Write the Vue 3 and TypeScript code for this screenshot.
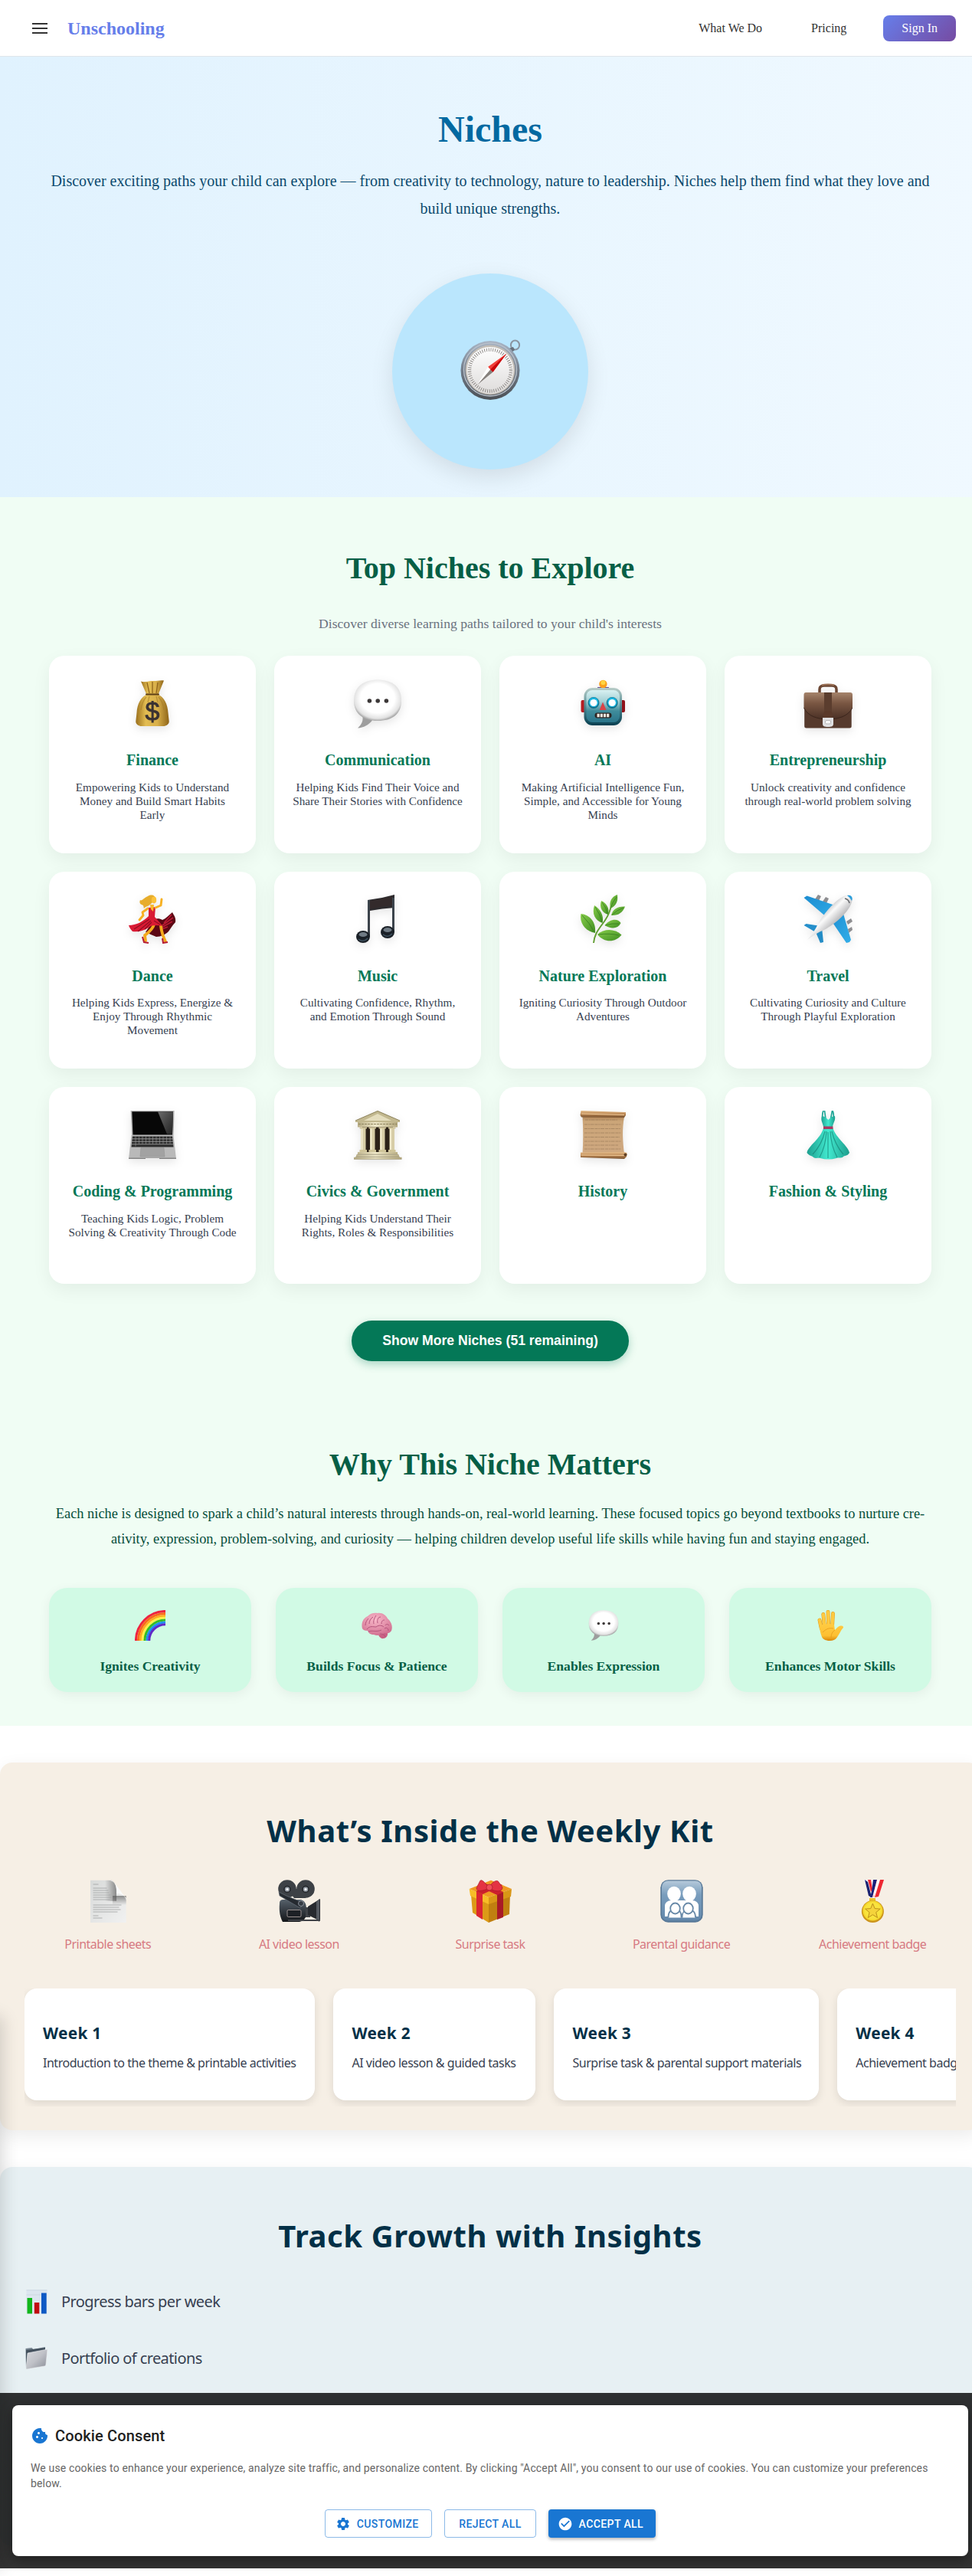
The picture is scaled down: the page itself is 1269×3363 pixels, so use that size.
<script setup lang="ts">
interface Niche {
  icon: string
  name: string
  text: string
}

interface Week {
  title: string
  text: string
  width: number
}

const niches: Niche[] = [
  { icon: 'money', name: 'Finance', text: 'Empowering Kids to Understand Money and Build Smart Habits Early' },
  { icon: 'speech', name: 'Communication', text: 'Helping Kids Find Their Voice and Share Their Stories with Confidence' },
  { icon: 'robot', name: 'AI', text: 'Making Artificial Intelligence Fun, Simple, and Accessible for Young Minds' },
  { icon: 'briefcase', name: 'Entrepreneurship', text: 'Unlock creativity and confidence through real-world problem solving' },
  { icon: 'dancer', name: 'Dance', text: 'Helping Kids Express, Energize & Enjoy Through Rhythmic Movement' },
  { icon: 'notes', name: 'Music', text: 'Cultivating Confidence, Rhythm, and Emotion Through Sound' },
  { icon: 'herb', name: 'Nature Exploration', text: 'Igniting Curiosity Through Outdoor Adventures' },
  { icon: 'plane', name: 'Travel', text: 'Cultivating Curiosity and Culture Through Playful Exploration' },
  { icon: 'laptop', name: 'Coding & Programming', text: 'Teaching Kids Logic, Problem Solving & Creativity Through Code' },
  { icon: 'temple', name: 'Civics & Government', text: 'Helping Kids Understand Their Rights, Roles & Responsibilities' },
  { icon: 'scroll', name: 'History', text: '' },
  { icon: 'dress', name: 'Fashion & Styling', text: '' },
]

const benefits = [
  { icon: 'rainbow', label: 'Ignites Creativity' },
  { icon: 'brain', label: 'Builds Focus & Patience' },
  { icon: 'speech', label: 'Enables Expression' },
  { icon: 'hand', label: 'Enhances Motor Skills' },
]

const kitItems = [
  { icon: 'page', label: 'Printable sheets' },
  { icon: 'camera', label: 'AI video lesson' },
  { icon: 'gift', label: 'Surprise task' },
  { icon: 'family', label: 'Parental guidance' },
  { icon: 'medal', label: 'Achievement badge' },
]

const weeks: Week[] = [
  { title: 'Week 1', text: 'Introduction to the theme & printable activities', width: 379.4 },
  { title: 'Week 2', text: 'AI video lesson & guided tasks', width: 264.1 },
  { title: 'Week 3', text: 'Surprise task & parental support materials', width: 345.7 },
  { title: 'Week 4', text: 'Achievement badge & reflection', width: 290 },
]

const insights = [
  { icon: 'chart', label: 'Progress bars per week' },
  { icon: 'folder', label: 'Portfolio of creations' },
]
</script>

<template>
  <div class="viewport">
    <svg class="sprites" aria-hidden="true">
      <defs>
        <linearGradient id="gGold" x1="0" x2="1"><stop offset="0" stop-color="#9a6f1c" /><stop offset=".3" stop-color="#e3bd52" /><stop offset=".65" stop-color="#d9b04a" /><stop offset="1" stop-color="#8e6418" /></linearGradient>
        <radialGradient id="gBubble" cx=".5" cy=".45" r=".55"><stop offset=".65" stop-color="#fff" /><stop offset=".9" stop-color="#e2e2e2" /><stop offset="1" stop-color="#a9a9a9" /></radialGradient>
        <linearGradient id="gRobot" x2="0" y2="1"><stop offset="0" stop-color="#d8f1f2" /><stop offset=".35" stop-color="#a5d0d4" /><stop offset=".65" stop-color="#3f8c9b" /><stop offset="1" stop-color="#2a7489" /></linearGradient>
        <linearGradient id="gRobotEdge" x2="0" y2="1"><stop offset="0" stop-color="#b9cdc8" /><stop offset=".5" stop-color="#4c8790" /><stop offset="1" stop-color="#073f50" /></linearGradient>
        <linearGradient id="gBrown" x2="0" y2="1"><stop offset="0" stop-color="#a5836b" /><stop offset=".4" stop-color="#7a5743" /><stop offset="1" stop-color="#4a3025" /></linearGradient>
        <linearGradient id="gLeaf" x2="1" y2="1"><stop offset="0" stop-color="#86cc49" /><stop offset="1" stop-color="#3f8d22" /></linearGradient>
        <linearGradient id="gBody" x1="0" y1="0" x2="1" y2="1"><stop offset=".25" stop-color="#8b8b8f" /><stop offset=".46" stop-color="#fafafa" /><stop offset=".75" stop-color="#8a8a8e" /></linearGradient>
        <linearGradient id="gStone" x1="0" x2="1"><stop offset="0" stop-color="#b8ad85" /><stop offset=".45" stop-color="#efe8c9" /><stop offset="1" stop-color="#b3a77d" /></linearGradient>
        <linearGradient id="gPaper" x2="0" y2="1"><stop offset="0" stop-color="#b08457" /><stop offset=".12" stop-color="#cba578" /><stop offset="1" stop-color="#cfa880" /></linearGradient>
        <linearGradient id="gRoll" x2="0" y2="1"><stop offset="0" stop-color="#e6bd8a" /><stop offset=".5" stop-color="#b98552" /><stop offset="1" stop-color="#76502e" /></linearGradient>
        <linearGradient id="gDress" x1="0" x2="1"><stop offset="0" stop-color="#1d9f8f" /><stop offset=".5" stop-color="#42ead0" /><stop offset="1" stop-color="#1c9c8b" /></linearGradient>
        <linearGradient id="gRim" x2="0" y2="1"><stop offset="0" stop-color="#a9b6c6" /><stop offset=".5" stop-color="#727c89" /><stop offset="1" stop-color="#4b5056" /></linearGradient>
        <linearGradient id="gDial" x2="0" y2="1"><stop offset="0" stop-color="#fff" /><stop offset="1" stop-color="#dedcdb" /></linearGradient>
        <linearGradient id="gHand" x2="0" y2="1"><stop offset="0" stop-color="#ffcb42" /><stop offset=".7" stop-color="#fdbf32" /><stop offset="1" stop-color="#d98609" /></linearGradient>
        <radialGradient id="gBrain" cx=".45" cy=".3" r=".75"><stop offset="0" stop-color="#f9b9c9" /><stop offset="1" stop-color="#cf6c8e" /></radialGradient>
        <linearGradient id="gPage" x2="1" y2="1"><stop offset="0" stop-color="#d8dad9" /><stop offset="1" stop-color="#f1f1f1" /></linearGradient>
        <linearGradient id="gShadeX" x2="1" y2="0"><stop offset="0" stop-color="#555" stop-opacity="0" /><stop offset="1" stop-color="#555" stop-opacity=".85" /></linearGradient>
        <linearGradient id="gShadeY" x2="0" y2="1"><stop offset="0" stop-color="#555" stop-opacity=".85" /><stop offset="1" stop-color="#555" stop-opacity="0" /></linearGradient>
        <linearGradient id="gCam" x2="0" y2="1"><stop offset="0" stop-color="#56616a" /><stop offset=".5" stop-color="#343a41" /><stop offset="1" stop-color="#141619" /></linearGradient>
        <linearGradient id="gFamily" x2="0" y2="1"><stop offset="0" stop-color="#b5c9da" /><stop offset=".35" stop-color="#799dbd" /><stop offset="1" stop-color="#6488ab" /></linearGradient>
        <linearGradient id="gFolder" x2="1" y2="1"><stop offset="0" stop-color="#d9dade" /><stop offset=".5" stop-color="#bfc1c7" /><stop offset="1" stop-color="#878b95" /></linearGradient>
        <linearGradient id="gBlue" x2="1" y2="1"><stop offset="0" stop-color="#1b8cd0" /><stop offset="1" stop-color="#33aee9" /></linearGradient>
        <linearGradient id="gGlare" x2="1" y2="1"><stop offset="0" stop-color="#6a6a6a" /><stop offset="1" stop-color="#222" /></linearGradient>
      </defs>

      <symbol id="compass" viewBox="0 0 80 80">
        <ellipse cx="72.5" cy="7.5" rx="5.6" ry="6" fill="none" stroke="#8a95a1" stroke-width="2" />
        <path d="M64 12l6-2 2 4-4 3z" fill="#68717c" />
        <circle cx="40" cy="40.5" r="38.5" fill="url(#gRim)" />
        <circle cx="40" cy="39.5" r="34.5" fill="none" stroke="#b8c0ca" stroke-width="1.4" />
        <circle cx="40" cy="40" r="32.4" fill="#c3beb7" />
        <circle cx="40" cy="40.5" r="30.6" fill="url(#gDial)" />
        <circle cx="40" cy="40.5" r="27" fill="none" stroke="#85817e" stroke-width="4.4" stroke-dasharray=".9 1.93" />
        <path d="M61.5 18.5L37 36l6.500 6.700z" fill="#f0403a" />
        <path d="M61.500 18.500L40 39.500l3.500 3.200z" fill="#c9060a" />
        <path d="M22.500 60L40 39.500l3.500 3.200z" fill="#86817d" />
        <path d="M22.500 60L37 36l3 3.500z" fill="#fff" />
      </symbol>

      <symbol id="money" viewBox="0 0 64 64">
        <path d="M17 2.500c5 2 10-1 15-.5s10-1.500 15-.5L39.500 20h-15z" fill="url(#gGold)" />
        <path d="M25 4l3 14M32 3v15M39 4l-2 14" stroke="#8f641c" stroke-width="1.300" fill="none" />
        <path d="M25 19.500h14c8 3 13 13 13.500 24l1.200 11c.3 4-3.700 6.500-7.700 6.500H18c-4 0-8-2.500-7.700-6.500l1.200-11C12 32.500 17 22.500 25 19.500z" fill="url(#gGold)" />
        <path d="M24 23c-4 4-6 10-7 17M40 23c4 4 6 10 7 17M28 22l-2 8M37 22l2 8" stroke="#a47a25" stroke-width="1.200" fill="none" opacity=".6" />
        <path d="M24 19.500h16" stroke="#5d3f16" stroke-width="2" stroke-linecap="round" />
      </symbol>

      <symbol id="speech" viewBox="0 0 64 64">
        <path d="M12 46c2 8-1 13-6 17.500 8-.5 14-4 19-10z" fill="#9d9d9d" />
        <path d="M32 .5c19 0 31 9 31 27S51 54 32 54 1 45 1 27.500 13 .5 32 .5z" fill="url(#gBubble)" />
        <circle cx="21.400" cy="28" r="2.800" fill="#3c3838" /><circle cx="32.200" cy="28" r="2.800" fill="#3c3838" /><circle cx="43.400" cy="28" r="2.800" fill="#3c3838" />
      </symbol>

      <symbol id="robot" viewBox="0 0 64 64">
        <rect x="3.500" y="27" width="7" height="16" rx="2" fill="#b51d22" /><rect x="54" y="27" width="7" height="16" rx="2" fill="#8f1119" />
        <path d="M25 10h15c0 6-15 6-15 0z" fill="#6a5091" />
        <circle cx="32.400" cy="6" r="5.200" fill="#fba01d" /><circle cx="32.400" cy="4.300" r="3" fill="#ffd542" />
        <rect x="7.500" y="11" width="49.500" height="49" rx="11" fill="url(#gRobotEdge)" />
        <rect x="10.500" y="14" width="43.500" height="42" rx="8" fill="url(#gRobot)" />
        <circle cx="20" cy="30.500" r="7.400" fill="#12708b" /><circle cx="44.200" cy="30.500" r="7.400" fill="#12708b" />
        <circle cx="20" cy="29.800" r="6.300" fill="#1bb6e0" /><circle cx="44.200" cy="29.800" r="6.300" fill="#1bb6e0" />
        <circle cx="20" cy="30.500" r="4.600" fill="#fff" /><circle cx="44.200" cy="30.500" r="4.600" fill="#fff" />
        <path d="M32 29.500l4.600 10.500h-9z" fill="#d94448" />
        <rect x="21.500" y="43.600" width="22" height="6.800" rx="3.400" fill="#2c2321" />
        <path d="M24.500 44.800h3.200v4.500h-3.200zM28.700 44.800h3.200v4.500h-3.200zM32.900 44.800h3.200v4.500h-3.200zM37.100 44.800h3.200v4.500h-3.200z" fill="#efe9df" />
      </symbol>

      <symbol id="briefcase" viewBox="0 0 64 64">
        <path d="M21 17v-4c0-3 2-5 6-5h10c4 0 6 2 6 5v4" fill="none" stroke="#6b4633" stroke-width="3.500" />
        <path d="M24 7.500c4-1.300 12-1.300 16 0" stroke="#9a7055" stroke-width="2" fill="none" />
        <rect x="1.200" y="19" width="61.500" height="44.500" rx="2.500" fill="#563a2d" />
        <path d="M3 17h58c2 0 3 1 3 3v17C58 48 46 52 32 52S6 48 .5 37V20c0-2 1-3 2.500-3z" fill="url(#gBrown)" />
        <path d="M.5 37C6 48 18 52 32 52s26-4 32-15" stroke="#3b251c" stroke-width="1" fill="none" />
        <path d="M27 17h10v28H27z" fill="#5b3d2e" />
        <path d="M26 47c0-5 3-6 6-6s6 1 6 6v6H26z" fill="#5a3a2b" />
        <path d="M25 50h14v8c0 3-2 4-7 4s-7-1-7-4z" fill="#dfe0e2" /><rect x="28.500" y="53.500" width="7" height="4.500" rx="1.500" fill="#f7f7f7" stroke="#aaa" stroke-width=".8" />
      </symbol>

      <symbol id="dancer" viewBox="0 0 64 64">
        <path d="M34 32c4-1 8-1 11 1 5-2 8-6 13-10 2 4 5 7 4 13-4 4-6 8-9 12-4 4-10 7-16 7-6-2-10-5-14-6z" fill="#5c0713" />
        <path d="M47 37l10-11M45 40l14-10M44 43l14-8M42 46l10-4" stroke="#b81a32" stroke-width="1.700" />
        <path d="M34 39c-2 7-7 10-12 14l1 7M43 41c1 8 2 12 6 20" stroke="#f4a91c" stroke-width="3.800" fill="none" stroke-linecap="round" stroke-linejoin="round" />
        <path d="M19 55l2 7 6 1M45 57l1 6 6-1" stroke="#b51c31" stroke-width="2" fill="none" />
        <path d="M27 28l8 1c3 4 7 7 10 12-7-1-13-2-18 2-6 4-13 6-21 5-2-2-4-5-5-8 10 0 19-5 26-12z" fill="#d91a34" />
        <path d="M28 32L8 45M30 34L13 48M31 36l-9 9M34 34l8 5" stroke="#8f0d21" stroke-width="1.100" />
        <path d="M27 17l9-1-1 13-8 1z" fill="#d91a34" /><path d="M29 13h5l-1 9-3-3z" fill="#f9b829" />
        <path d="M26 18l-7 5 1 4-5 6M36 17l7-3 1-8" stroke="#f7b022" stroke-width="2.900" fill="none" stroke-linecap="round" stroke-linejoin="round" />
        <path d="M26 2c5-3 10-1 10 4l-5 5c-3 4-8 4-10 7-1-3 0-4-3-5-3-1-3-4-2-6 2 2 5-3 10-5z" fill="#e7ad2c" />
        <ellipse cx="34" cy="7" rx="3.200" ry="4.400" fill="#fcc239" />
      </symbol>

      <symbol id="notes" viewBox="0 0 64 64">
        <path d="M19 7Q37 5 54 0v17Q38 18 22 21v34h-3z" fill="#2d2b2e" /><path d="M51 4h3v45h-3z" fill="#3c444c" /><path d="M19 7h2.800v48H19z" fill="#3c444c" />
        <path d="M22 8Q37 6 51 2v12Q37 15 22 19z" fill="#332a2b" />
        <ellipse cx="13" cy="55" rx="9" ry="8" fill="#1a2027" /><ellipse cx="45" cy="49" rx="9" ry="8" fill="#1a2027" />
        <ellipse cx="13" cy="52" rx="5.500" ry="3" fill="#6f7a84" /><ellipse cx="45" cy="46" rx="5.500" ry="3" fill="#6f7a84" />
        <path d="M7 58q6 5 12-1M39 52q6 5 12-1" stroke="#3e5260" stroke-width="1.500" fill="none" />
      </symbol>

      <symbol id="herb" viewBox="0 0 64 64">
        <path d="M20 63c1-11 6-17 11-24 6-8 9-13 12-24" stroke="#5f9c2f" stroke-width="1.900" fill="none" />
        <path d="M3.500 25c9 1 20 8 18.500 25C10 48 1 38 3.500 25z" fill="url(#gLeaf)" />
        <path d="M21 14c7 4 13 13 10.500 23-10-3-14-13-10.500-23z" fill="url(#gLeaf)" />
        <path d="M30 8c7 3 11 10 9 18-8-2-12-10-9-18z" fill="url(#gLeaf)" />
        <path d="M51 0c1 8-1 14-9 18-2-9 1-15 9-18z" fill="url(#gLeaf)" />
        <path d="M61 15.500c-3 8-9 12-18 11.500 2-8 8-12 18-11.500z" fill="url(#gLeaf)" />
        <path d="M55.500 37c-4 8-13 8-21 3 6-8 17-10 21-3z" fill="url(#gLeaf)" />
        <path d="M56.500 52.500C48 63 34 63 25 52c9-8 22-8 31.500.5z" fill="url(#gLeaf)" />
        <path d="M5 27q10 10 16 22M22 16q7 10 9 20M31 10q6 7 7 15M50 3q-6 7-7.500 14M59 17q-9 3-15 9.500M53 38q-9-1-18 2M53 53q-12-3-27-1" stroke="#367b20" stroke-width=".8" fill="none" />
      </symbol>

      <symbol id="plane" viewBox="0 0 64 64">
        <path d="M15 6l4-6 4 2-3 6zM25 9l4-6 4 2-3 6zM56 35l6-4 2 4-6 4zM58 45l5-3 1 4-5 4z" fill="#8d8d90" />
        <path d="M.5 4l4-2.500L44 15 32 31z" fill="url(#gBlue)" /><path d="M60 62l2-3-12-41-15 14 21 31z" fill="url(#gBlue)" />
        <path d="M.5 40l3-2 19 3-5 9z" fill="#258fcb" /><path d="M26 62l-4 1-6-14 8-6z" fill="#238cc6" />
        <path d="M5 59c6-7 11-14 14-21C27 24 43 5 55 1c6-2 10 1 8.500 7C61 21 42 38 27 46 19 49 12 54 5 59z" fill="url(#gBody)" />
        <path d="M57 1c5-1 8 2 6 7q-2-4-6-7z" fill="#2b9edc" /><path d="M54 5q5 1 6 6" stroke="#66686b" stroke-width="1.700" fill="none" />
      </symbol>

      <symbol id="laptop" viewBox="0 0 64 64">
        <path d="M3.600 0h57l-1 32H5z" fill="#b4b4b4" /><path d="M5.300 1.200h53.700l-1 30.300H6.500z" fill="#070707" />
        <path d="M39 1.200h20l-1 29.300h-7z" fill="url(#gGlare)" />
        <path d="M4.500 32h55l3.500 31H1z" fill="#b9b9b9" /><path d="M1 61.500h62V63H1z" fill="#858585" />
        <path d="M6 33.500h52l1.500 14H4.500z" fill="#2c2c2c" />
        <path d="M5 36.800h54M5 40.300h54M5 43.800h54" stroke="#a8a8a8" stroke-width=".8" />
        <path d="M10 33.500v13M14.500 33.500v10M19 33.500v10M23.500 33.500v10M28 33.500v10M32.500 33.500v10M37 33.500v10M41.500 33.500v10M46 33.500v10M50.500 33.500v10M55 33.500v10" stroke="#9a9a9a" stroke-width=".6" />
        <path d="M17 48.500h30l1 11.500H16z" fill="#a2a2a2" stroke="#8f8f8f" stroke-width=".5" /><path d="M23 62h18v1H23z" fill="#eee" />
      </symbol>

      <symbol id="temple" viewBox="0 0 64 64">
        <path d="M12 21h40v33H12z" fill="#2b2118" />
        <path d="M32 0l29 13v2H3v-2z" fill="#c2b88f" /><path d="M32 4l18 9H14z" fill="#e4ddbd" /><path d="M3 13L32 .5 61 13" stroke="#8f8560" stroke-width="1" fill="none" />
        <path d="M6 15h52v6.500H6z" fill="url(#gStone)" /><path d="M7 17.500h50" stroke="#8e845f" stroke-dasharray="3 1" />
        <path d="M10 22h6.500v31H10zM22 22h6.500v31H22zM35 22h6.500v31H35zM47.500 22H54v31h-6.500z" fill="#d7cda7" />
        <path d="M11.500 22v31M23.500 22v31M36.500 22v31M49 22v31" stroke="#f2ecd0" stroke-width="2" />
        <path d="M8.500 51h9.500v3H8.500zM20.500 51H30v3h-9.500zM33.500 51H43v3h-9.500zM46 51h9.500v3H46zM8.500 21.500h9.500v2H8.500zM20.500 21.500H30v2h-9.500zM33.500 21.500H43v2h-9.500zM46 21.500h9.500v2H46z" fill="#cfc499" />
        <path d="M6 54h52v3H6zM4 57.500h56v2.700H4zM1 60.700h62.500v2.500H1z" fill="url(#gStone)" /><path d="M5 57.200h54M3 60.400h58M1 63.200h62.500" stroke="#8b815d" stroke-width=".7" />
      </symbol>

      <symbol id="scroll" viewBox="0 0 64 64">
        <path d="M5.500 8H60c-3 16-2 32 0 48H5.500c1-16 1-32 0-48z" fill="url(#gPaper)" />
        <path d="M9 12h42M8 18h48M8 23.500h47M8 29h48M8 34.500h46M8 40h48M8 45h44M8 50h48" stroke="#8d7150" stroke-width=".9" stroke-dasharray="4 .8 2 .7 5 1" opacity=".6" />
        <path d="M3.500 0L62 2v4l-2 3L4 8.500 2.500 6z" fill="url(#gRoll)" /><path d="M3 54.500l57-.5 3.500 1-.5 5-3 3L3 61z" fill="url(#gRoll)" />
        <path d="M4 4l56 1.500M4 58l57 .5" stroke="#f1cb9a" stroke-width="1" /><circle cx="61.500" cy="57.500" r="2" fill="#604025" />
      </symbol>

      <symbol id="dress" viewBox="0 0 64 64">
        <path d="M25 11q-1-7 1-11M39 11q1-7-1-11M29 11l-1.500-11M35.500 11L37.500 0" stroke="#1fa596" stroke-width="1.700" fill="none" />
        <path d="M24 7l4 1 4.300 4L37 8l4-1c1 6-2 8-3 14H26c-1-6-4-8-2-14z" fill="url(#gDress)" />
        <path d="M26 23h12.500c4 13 20 23 21.500 32-3 5-7 3-9 6-4 1-6 0-8 1-7 2-14 2-21 0-3-1-6 1-9-1-1-2-6-2-8.500-6C6 46 22 37 26 23z" fill="url(#gDress)" />
        <path d="M28 27Q24 44 12 57M30 27q-1 19-9 34M35 27q1 19 9 34M37 27q4 17 15 30M32 28v34" stroke="#158576" stroke-width="1.200" fill="none" opacity=".7" />
        <path d="M26 20.500h12.500v3.500H26z" fill="#a83961" />
      </symbol>

      <symbol id="rainbow" viewBox="0 0 40 40">
        <g fill="none" stroke-width="3.100">
          <path d="M1.500 40A38.500 38.500 0 0 1 40 1.500" stroke="#ee2340" /><path d="M4.500 40A35.500 35.500 0 0 1 40 4.500" stroke="#fa691c" />
          <path d="M7.500 40A32.500 32.500 0 0 1 40 7.500" stroke="#ffab1f" /><path d="M10 40A30 30 0 0 1 40 10" stroke="#fff04b" />
          <path d="M13 40a27 27 0 0 1 27-27" stroke="#35bd25" /><path d="M16 40a24 24 0 0 1 24-24" stroke="#218ff0" /><path d="M18.700 40A21.300 21.300 0 0 1 40 18.700" stroke="#6029c8" />
        </g>
      </symbol>

      <symbol id="brain" viewBox="0 0 40 40">
        <path d="M21 29l11-2c4 3 2 9-3 10s-7-4-8-8z" fill="#c95f83" />
        <path d="M1 24C-1 16 3 10 8 8c3-4 9-5 13-4 6-1 11 3 13 7 5 4 7 10 5 16-2 3-5 4-9 3-5 3-10 4-14 2-4 0-7-2-8-5-4 0-6-1-7-3z" fill="url(#gBrain)" />
        <path d="M7 25c4-5 8-3 12-3 4-3 8-2 10 0M9 28c5-2 10 1 17-2M5 20c0-4 2-7 4-9M10 18c0-4 2-7 5-9M16 18c-1-4 1-8 3-11M21 17c-1-5 1-8 4-8M26 18c0-4 2-5 4-5M31 20c1-2 3-2 5 0M30 24c3-2 5 0 5 3M24 31c4 0 6 1 7 4" stroke="#b4547b" stroke-width="1" fill="none" />
      </symbol>

      <symbol id="hand" viewBox="0 0 40 40">
        <path d="M8.300 24L6 13M12.500 22L10.800 5.500M17.600 22L17 2.300M22.500 22l1-17.500" stroke="#de9415" stroke-width="4.800" stroke-linecap="round" fill="none" />
        <path d="M8.300 24L6 13M12.500 22L10.800 5.500M17.600 22L17 2.300M22.500 22l1-17.500" stroke="#ffca40" stroke-width="3.900" stroke-linecap="round" fill="none" />
        <path d="M6 20c5-2 13-3 19-1l1 7c3-3 5-6 9-5.500 2 .5 2.500 2 1.500 3-3 3-4.500 8-8 12.500C25 41.500 12 41.500 9 35 7 30 6 25 6 20z" fill="url(#gHand)" />
        <path d="M10 29c5-5 9-6 14-5M21 36c0-5 2-8 5-10" stroke="#e69b1b" stroke-width=".8" fill="none" />
      </symbol>

      <symbol id="page" viewBox="0 0 56 56">
        <path d="M5 .7h28c7 7 12 17 18.700 24V56H5z" fill="url(#gPage)" />
        <path d="M24 .7h9c4 3 6 7 6 16v11H24z" fill="url(#gShadeX)" opacity=".75" />
        <path d="M34 21h17.700v12H34z" fill="url(#gShadeY)" opacity=".75" />
        <path d="M29 .7c8 1 11 7 10 17.500 6-.5 11 1.800 12.700 8.300V24C45 16 38 5 33 .7z" fill="#fafafa" />
        <path d="M8.500 6h7M8.500 11h18M8.500 14h20M8.500 17h21M8.500 20h23M8.500 23h24M8.500 26h22M8.500 33h37M8.500 36h34M8.500 39h36M8.500 42h32M8.500 47h7M8.500 50h12" stroke="#9fa1a1" stroke-width=".8" />
      </symbol>

      <symbol id="camera" viewBox="0 0 56 56">
        <path d="M3 31c0-4 2-5 5-5h23c6 2 7 7 7 13v6c-1 7-5 9-9 10H7C4 49 2 42 3 31z" fill="url(#gCam)" />
        <rect x="37" y="36" width="6" height="13" fill="#3f4247" /><path d="M40 35l16-10v29l-16-8z" fill="#272a2f" /><path d="M51 29l4-4v30l-4-3z" fill="#555a61" />
        <path d="M14 52h42v2H14z" fill="#3f4247" />
        <circle cx="13" cy="12" r="11.800" fill="#3d4146" /><circle cx="37" cy="12" r="11.800" fill="#3d4146" /><path d="M13 12h24v12H22z" fill="#3d4146" />
        <path d="M2 16l10 5 22 9-4 7L3 21z" fill="#252a30" stroke="#69727d" stroke-width=".7" />
        <circle cx="13" cy="12.500" r="4" fill="#929aa3" stroke="#202327" stroke-width="1.500" /><circle cx="37" cy="12.500" r="4" fill="#929aa3" stroke="#202327" stroke-width="1.500" /><circle cx="13" cy="12.500" r="1.500" fill="#fff" /><circle cx="37" cy="12.500" r="1.500" fill="#fff" />
        <circle cx="31" cy="31" r="3.500" fill="#343a42" stroke="#8a919a" stroke-width="1" />
        <rect x="13" y="39.500" width="18" height="9" rx="1.500" fill="#1d2025" stroke="#c9b9b6" stroke-width=".7" />
      </symbol>

      <symbol id="gift" viewBox="0 0 56 56">
        <path d="M3 20l23 10v26L5 43z" fill="#dc9a17" /><path d="M26 30l28-11-1 26-27 11z" fill="#c07f10" />
        <path d="M.7 12L29 .7 56 12 26 23z" fill="#ef9a22" /><path d="M.7 12L26 23v9L2 21z" fill="#f7bd27" /><path d="M26 23l30-11-1 10-29 10z" fill="#d99716" />
        <path d="M10 15l8 4v33l-8-5z" fill="#db2631" /><path d="M37 19l8-3v33l-8 3z" fill="#a91a26" /><path d="M9 15l28-11 7 3-26 12zM20 4l25 12-8 4L12 8z" fill="#cc202d" />
        <path d="M26 10c-9-12-11-10-12-7l-4 8c0 5 9 4 16 0zM27 9c5-8 11-9 12-6l5 7c0 6-9 6-16 2z" fill="#e43343" stroke="#a91828" stroke-width=".7" />
        <circle cx="27" cy="10" r="4" fill="#ef4d59" stroke="#a91828" stroke-width=".7" />
      </symbol>

      <symbol id="family" viewBox="0 0 56 56">
        <rect x=".3" y=".3" width="55.400" height="55.400" rx="10" fill="#587998" /><rect x="2" y="1.500" width="52" height="52" rx="8" fill="url(#gFamily)" />
        <path d="M6 48V34c0-4 4-7 8-7h28c4 0 8 3 8 7v14z" fill="#fff" />
        <ellipse cx="18" cy="18.500" rx="8.800" ry="9.800" fill="#fff" /><ellipse cx="38" cy="18.500" rx="8.800" ry="9.800" fill="#fff" />
        <g fill="#fff" stroke="#6889a8" stroke-width="1.800"><path d="M10.500 49.500c0-8 3-10 9-10s8 2 8 10M28.500 49.500c0-8 3-10 8.500-10s9 2 9 10" /><ellipse cx="19.500" cy="37.500" rx="6.300" ry="7" /><ellipse cx="36.500" cy="37.500" rx="6.300" ry="7" /></g>
      </symbol>

      <symbol id="medal" viewBox="0 0 56 56">
        <path d="M29 0h8l-7 22h-3z" fill="#ef2731" /><path d="M16 0h14l-1 10-3 6z" fill="#f4f4fa" /><path d="M18 0l4 3 5 20-4-2z" fill="#1b2271" /><path d="M22 0h4l2 12-2 4z" fill="#ef2731" /><path d="M29 0h5l-6 23h-3l2-8z" fill="#19207b" /><path d="M34 0h4l-7 20-3 3z" fill="#fff" /><path d="M38 0h5l-7 22-5 1z" fill="#ee2731" />
        <path d="M24 24h8v5h-8z" fill="#ecc02e" /><circle cx="28.400" cy="41.500" r="14.500" fill="#cc951d" /><circle cx="28.400" cy="40.600" r="13" fill="#f5d82e" /><circle cx="28.400" cy="40.600" r="11" fill="#f9e33e" />
        <path d="M28.400 31l2.700 6.600 7.100.5-5.500 4.500 1.800 6.900-6.100-3.800-6 3.800 1.700-6.900-5.500-4.500 7.200-.5z" fill="#f5d33b" stroke="#bd9119" stroke-width="1" />
      </symbol>

      <symbol id="chart" viewBox="0 0 32 32">
        <path d="M2.500 0h27v31.500h-27z" fill="#dce6ef" /><path d="M2.500 1h27M2.500 7h27" stroke="#c8d3de" stroke-width=".7" />
        <path d="M3.500 11H10v20.500H3.500z" fill="#12b61c" /><path d="M12.800 17h6.500v14.500h-6.500z" fill="#c00d10" /><path d="M22 4.500h6.700v27H22z" fill="#0e59c4" />
      </symbol>

      <symbol id="folder" viewBox="0 0 32 32">
        <path d="M1.500 3l8-1 2 2L27 1v24L2 30z" fill="#75838f" /><path d="M2 5l25-3v3L4 9 2 29z" fill="#43505d" />
        <path d="M4 9l26-5-2 19c0 2-1 3-2 3L2 30z" fill="url(#gFolder)" stroke="#eef0f2" stroke-width=".6" />
      </symbol>
    </svg>

    <div class="page">
      <header class="nav">
        <button class="menu" aria-label="Menu"><i /><i /><i /></button>
        <a class="brand">Unschooling</a>
        <nav class="links">
          <a>What We Do</a>
          <a>Pricing</a>
          <a class="signin">Sign In</a>
        </nav>
      </header>

      <section class="hero">
        <h1>Niches</h1>
        <p>Discover exciting paths your child can explore — from creativity to technology, nature to leadership. Niches help them find what they love and build unique strengths.</p>
        <div class="disc"><svg><use href="#compass" /></svg></div>
      </section>

      <section class="niches">
        <h2>Top Niches to Explore</h2>
        <p class="lead">Discover diverse learning paths tailored to your child's interests</p>
        <div class="grid">
          <article v-for="n in niches" :key="n.name" class="card">
            <svg>
              <use :href="'#' + n.icon" />
              <text v-if="n.icon === 'money'" class="dollar" x="32" y="53" text-anchor="middle">$</text>
            </svg>
            <h3>{{ n.name }}</h3>
            <p v-if="n.text">{{ n.text }}</p>
          </article>
        </div>
        <button class="more">Show More Niches (51 remaining)</button>
      </section>

      <section class="why">
        <h2>Why This Niche Matters</h2>
        <p class="text">Each niche is designed to spark a child’s natural interests through hands-on, real-world learning. These focused topics go beyond textbooks to nurture cre-<br>ativity, expression, problem-solving, and curiosity — helping children develop useful life skills while having fun and staying engaged.</p>
        <div class="benefits">
          <div v-for="b in benefits" :key="b.label" class="benefit">
            <svg><use :href="'#' + b.icon" /></svg>
            <strong>{{ b.label }}</strong>
          </div>
        </div>
      </section>

      <section class="kit">
        <h2>What’s Inside the Weekly Kit</h2>
        <div class="kit-items">
          <div v-for="k in kitItems" :key="k.label" class="kit-item">
            <svg><use :href="'#' + k.icon" /></svg>
            <span>{{ k.label }}</span>
          </div>
        </div>
        <div class="weeks">
          <article v-for="w in weeks" :key="w.title" class="week" :style="{ width: w.width + 'px' }">
            <h3>{{ w.title }}</h3>
            <p>{{ w.text }}</p>
          </article>
        </div>
      </section>

      <section class="growth">
        <h2>Track Growth with Insights</h2>
        <ul>
          <li v-for="i in insights" :key="i.label">
            <svg><use :href="'#' + i.icon" /></svg>
            <span>{{ i.label }}</span>
          </li>
        </ul>
      </section>

      <aside class="drawer" />

      <div class="consent">
        <div class="dialog">
          <h4>
            <svg viewBox="0 0 24 24"><path d="M21.950 10.990c-1.790-.03-3.700-1.950-2.680-4.220-2.980 1-5.770-1.590-5.190-4.560C6.950.71 2 6.580 2 12c0 5.520 4.480 10 10 10 5.890 0 10.540-5.080 9.950-11.010zM8.500 15c-.83 0-1.500-.67-1.500-1.500S7.670 12 8.500 12s1.500.67 1.500 1.500S9.330 15 8.500 15zm2-5C9.670 10 9 9.330 9 8.500S9.670 7 10.500 7s1.500.67 1.500 1.500-.67 1.500-1.500 1.500zm4.500 6c-.55 0-1-.45-1-1s.45-1 1-1 1 .45 1 1-.45 1-1 1z" /></svg>
            Cookie Consent
          </h4>
          <p>We use cookies to enhance your experience, analyze site traffic, and personalize content. By clicking "Accept All", you consent to our use of cookies. You can customize your preferences below.</p>
          <div class="actions">
            <button class="btn outline wide">
              <svg viewBox="0 0 24 24"><path d="M19.140 12.940c.04-.3.06-.61.06-.94 0-.32-.02-.64-.07-.94l2.030-1.580c.18-.14.23-.41.12-.61l-1.920-3.320c-.12-.22-.37-.29-.59-.22l-2.390.96c-.5-.38-1.030-.7-1.620-.94l-.36-2.540c-.04-.24-.24-.41-.48-.41h-3.840c-.24 0-.43.17-.47.41l-.36 2.540c-.59.24-1.130.57-1.620.94l-2.390-.96c-.22-.08-.47 0-.59.22L2.740 8.870c-.12.21-.08.47.12.61l2.030 1.580c-.05.3-.09.63-.09.94s.02.64.07.94l-2.030 1.580c-.18.14-.23.41-.12.61l1.920 3.320c.12.22.37.29.59.22l2.390-.96c.5.38 1.030.7 1.620.94l.36 2.540c.05.24.24.41.48.41h3.840c.24 0 .44-.17.47-.41l.36-2.540c.59-.24 1.130-.56 1.620-.94l2.390.96c.22.08.47 0 .59-.22l1.920-3.320c.12-.22.07-.47-.12-.61l-2.010-1.580zM12 15.600c-1.980 0-3.600-1.620-3.600-3.600s1.620-3.600 3.600-3.600 3.600 1.620 3.600 3.600-1.620 3.600-3.600 3.600z" /></svg>
              CUSTOMIZE
            </button>
            <button class="btn outline">REJECT ALL</button>
            <button class="btn solid wide">
              <svg viewBox="0 0 24 24"><path d="M12 2C6.480 2 2 6.480 2 12s4.480 10 10 10 10-4.480 10-10S17.520 2 12 2zm-2 15-5-5 1.410-1.410L10 14.170l7.590-7.590L19 8l-9 9z" /></svg>
              ACCEPT ALL
            </button>
          </div>
        </div>
      </div>
    </div>
  </div>
</template>

<style scoped>
* {
  box-sizing: border-box;
}
h1, h2, h3, h4, p, ul {
  margin: 0;
  padding: 0;
}
svg {
  display: block;
}
button {
  border: 0;
  padding: 0;
  background: none;
  font: inherit;
}
.sprites {
  position: absolute;
  width: 0;
  height: 0;
}
.viewport {
  width: 100%;
  height: 3363px;
  overflow: hidden;
  background: #fff;
}
.page {
  position: relative;
  width: 1280px;
  height: 3363px;
  overflow: hidden;
  font-family: 'Liberation Serif', 'Times New Roman', serif;
}

.nav {
  display: flex;
  align-items: center;
  height: 74px;
  padding: 1.500px 32px 0;
  border-bottom: 1px solid #dfe5ea;
  background: #fff;
}
.menu {
  display: flex;
  flex-direction: column;
  gap: 4px;
  width: 40px;
  padding-left: 10px;
}
.menu i {
  width: 20px;
  height: 2px;
  background: #333;
}
.brand {
  margin-left: 16px;
  font-size: 24px;
  font-weight: 700;
  line-height: 28px;
  color: #667eea;
}
.links {
  display: flex;
  align-items: center;
  gap: 32px;
  margin-left: auto;
  font-size: 16px;
  line-height: 18.400px;
  color: #333;
}
.links a {
  padding: 8px 16px;
}
.links .signin {
  padding: 8px 24px;
  border-radius: 8px;
  background: linear-gradient(135deg, #667eea 0%, #764ba2 100%);
  color: #fff;
}

.hero {
  height: 575px;
  padding: 67px 64px 0;
  background: linear-gradient(to right, #e0f2fe, #f0f9ff);
  text-align: center;
}
.hero h1 {
  font-size: 48px;
  line-height: 56px;
  color: #0369a1;
}
.hero p {
  margin-top: 20.500px;
  font-size: 20px;
  line-height: 36px;
  color: #0c4a6e;
}
.disc {
  display: flex;
  justify-content: center;
  width: 256px;
  height: 256px;
  margin: 67.500px auto 0;
  padding-top: 86px;
  border-radius: 50%;
  background: #bae6fd;
  box-shadow: 0 10px 30px rgba(0, 0, 0, 0.1);
}
.disc svg {
  width: 80px;
  height: 80px;
}

.niches {
  height: 1191.700px;
  padding: 68.500px 64px 0;
  background: #f0fdf4;
  text-align: center;
}
.niches h2, .why h2 {
  font-size: 40px;
  line-height: 48px;
  color: #065f46;
}
.lead {
  margin-top: 38.500px;
  font-size: 17.600px;
  line-height: 20px;
  color: #6b7280;
}
.grid {
  display: grid;
  grid-template-columns: repeat(4, 1fr);
  grid-auto-rows: 257.400px;
  gap: 24px;
  margin-top: 32.300px;
}
.card {
  padding: 30.700px 24px 0;
  border-radius: 20px;
  background: #fff;
  box-shadow: 0 8px 24px rgba(0, 0, 0, 0.06);
}
.card svg {
  width: 64px;
  height: 64px;
  margin: 0 auto;
  overflow: visible;
  filter: drop-shadow(0 4px 6px rgba(0, 0, 0, 0.1));
}
.dollar {
  font-family: 'Liberation Sans', Arial, sans-serif;
  font-size: 34px;
  fill: #3a3232;
  stroke: #3a3232;
  stroke-width: 0.9px;
}
.card h3 {
  margin-top: 29.300px;
  font-size: 20px;
  line-height: 24px;
  color: #047857;
}
.card p {
  margin-top: 14.600px;
  font-size: 15.200px;
  line-height: 18px;
  color: #374151;
}
.more {
  display: block;
  width: 361.600px;
  height: 52.400px;
  margin: 47.800px auto 0;
  border-radius: 50px;
  background: #047857;
  box-shadow: 0 4px 12px rgba(4, 120, 87, 0.3);
  color: #fff;
  font-family: 'Liberation Sans', Arial, sans-serif;
  font-size: 17.600px;
  font-weight: 700;
}

.why {
  height: 412.300px;
  padding: 47.600px 64px 0;
  background: #f0fdf4;
  text-align: center;
}
.why .text {
  margin-top: 24px;
  font-size: 18.400px;
  line-height: 33.100px;
  white-space: nowrap;
  color: #064e3b;
}
.benefits {
  display: grid;
  grid-template-columns: repeat(4, 1fr);
  gap: 32px;
  margin-top: 46.500px;
}
.benefit {
  height: 136.300px;
  padding-top: 29px;
  border-radius: 24px;
  background: #d1fae5;
  box-shadow: 0 4px 16px rgba(0, 0, 0, 0.06);
}
.benefit svg {
  width: 40px;
  height: 40px;
  margin: 0 auto;
}
.benefit strong {
  display: block;
  margin-top: 23.400px;
  font-size: 17.600px;
  line-height: 20px;
  color: #065f46;
}

.kit, .growth {
  margin-top: 48px;
  border-radius: 16px;
  box-shadow: 0 8px 24px rgba(0, 0, 0, 0.08);
  font-family: 'Noto Sans', Tahoma, sans-serif;
}
.kit h2, .growth h2 {
  font-size: 40px;
  line-height: 48px;
  letter-spacing: 0.58px;
  text-align: center;
  color: #023047;
}
.kit {
  height: 480.400px;
  padding: 65.500px 32px 0;
  background: #f6efe5;
}
.kit-items {
  display: grid;
  grid-template-columns: repeat(5, 1fr);
  gap: 32px;
  margin-top: 39.500px;
}
.kit-item {
  text-align: center;
  font-size: 16px;
  line-height: 22px;
  letter-spacing: -0.52px;
  color: #d77a82;
}
.kit-item svg {
  width: 56px;
  height: 56px;
  margin: 0 auto 17.300px;
}
.kit-item span {
  display: block;
}
.weeks {
  display: flex;
  gap: 24px;
  margin-top: 46.700px;
  padding-bottom: 8px;
  overflow: hidden;
}
.week {
  flex: none;
  height: 146px;
  padding: 45.700px 24px 0;
  border-radius: 16px;
  background: #fff;
  box-shadow: 0 4px 12px rgba(0, 0, 0, 0.1);
  white-space: nowrap;
}
.week h3 {
  font-size: 20.800px;
  line-height: 24px;
  letter-spacing: 0.3px;
  color: #023047;
}
.week p {
  margin-top: 16.100px;
  font-size: 16px;
  line-height: 22px;
  letter-spacing: -0.47px;
  color: #374151;
}

.growth {
  height: 495px;
  padding: 65.800px 32px 0;
  background: #e7f0f3;
}
.growth ul {
  display: flex;
  flex-direction: column;
  gap: 42px;
  margin-top: 45.500px;
  list-style: none;
}
.growth li {
  display: flex;
  gap: 16px;
  height: 32px;
  font-size: 20px;
  line-height: 31px;
  letter-spacing: -0.6px;
  color: #374151;
}
.growth li svg {
  width: 32px;
  height: 32px;
}

.drawer {
  position: absolute;
  top: 2633px;
  left: -280px;
  width: 280px;
  height: 720px;
  box-shadow: 4px 0 20px rgba(0, 0, 0, 0.15);
}

.consent {
  position: absolute;
  top: 3124.400px;
  left: 0;
  width: 1280px;
  height: 228.600px;
  padding: 16px;
  background: rgba(0, 0, 0, 0.8);
  font-family: Roboto, sans-serif;
}
.dialog {
  height: 196.600px;
  padding: 28px 24px 0;
  border-radius: 8px;
  background: #fff;
  box-shadow: 0 5px 16px rgba(0, 0, 0, 0.35);
}
.dialog h4 {
  display: flex;
  gap: 8px;
  font-size: 20px;
  font-weight: 500;
  line-height: 24px;
  letter-spacing: 0.15px;
  color: #212121;
}
.dialog h4 svg {
  width: 24px;
  height: 24px;
  fill: #1976d2;
}
.dialog p {
  margin-top: 20px;
  font-size: 14px;
  line-height: 20px;
  letter-spacing: 0.15px;
  color: #666;
}
.actions {
  display: flex;
  justify-content: center;
  gap: 16px;
  margin-top: 23.900px;
}
.btn {
  display: flex;
  align-items: center;
  justify-content: center;
  gap: 8px;
  width: 119.600px;
  height: 36.500px;
  border-radius: 4px;
  font-size: 14px;
  font-weight: 500;
  letter-spacing: 0.4px;
  white-space: nowrap;
}
.btn.wide {
  width: 140px;
}
.btn svg {
  width: 20px;
  height: 20px;
  margin-left: -4px;
  fill: currentColor;
}
.outline {
  border: 1px solid rgba(25, 118, 210, 0.5);
  color: #1976d2;
}
.solid {
  background: #1976d2;
  color: #fff;
  box-shadow: 0 2px 4px rgba(0, 0, 0, 0.3);
}
</style>

<style>
body {
  overflow: hidden;
}
</style>
